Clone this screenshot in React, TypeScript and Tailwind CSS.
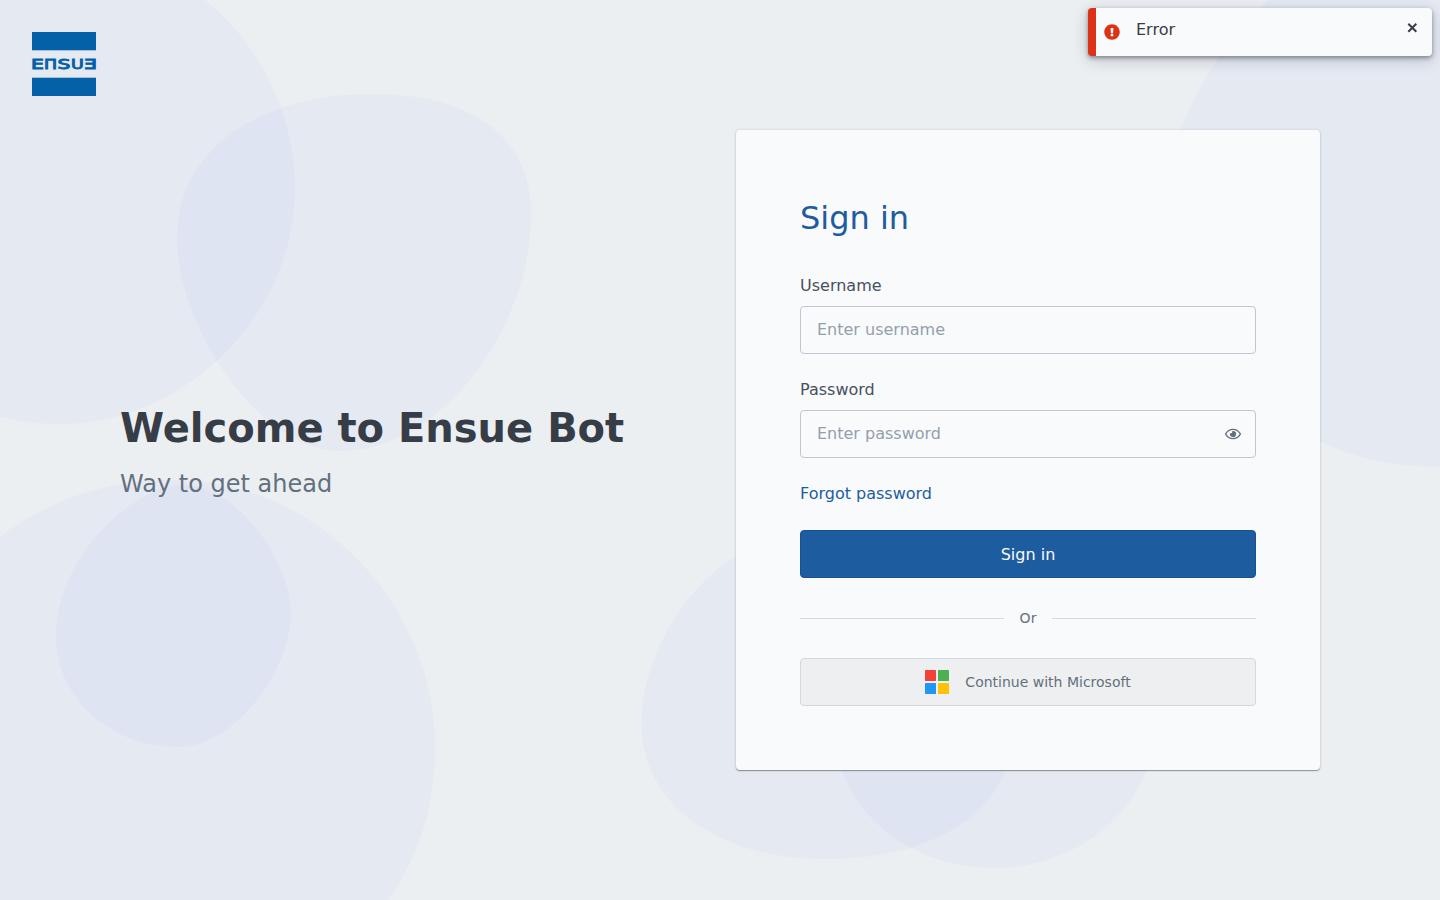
import { FaExclamationCircle, FaRegEye } from "react-icons/fa";

const blobs = [
  "M0 0H205C262 46 295 118 295 187C295 320 181 424 60 424C39 424 19 421 0 417Z",
  "M372 94C478 94 531 142 531 213C531 330 440 451 340 451C262 451 177 330 177 238C177 145 265 94 372 94Z",
  "M0 537C48 500 108 480 170 480C320 480 435 606 435 748C435 803 420 855 388 900H0Z",
  "M182 485C136 485 56 555 56 636C56 700 112 747 178 747C235 747 291 670 291 613C291 565 240 485 182 485Z",
  "M736 556C678 592 641.5 665 641.5 723C641.5 806 720 859 825 859C910 859 982 830 1005 771V600Z",
  "M842 771C864 832 928 868 995 868C1062 868 1124 828 1146 771L1100 650H880Z",
  "M1268 0C1232 32 1200 80 1181 130L1200 300L1320 441C1356 460 1400 467 1440 466.5V0Z",
];

function Background() {
  return (
    <svg
      className="absolute inset-0 h-full w-full"
      viewBox="0 0 1440 900"
      preserveAspectRatio="xMidYMid slice"
      fill="rgb(177,189,250)"
      fillOpacity={0.1}
      aria-hidden="true"
    >
      {blobs.map((d) => (
        <path key={d} d={d} />
      ))}
    </svg>
  );
}

const wordmark = [
  { char: "E", transform: "translate(-1.1 36.55) scale(1.54 1)" },
  { char: "Π", transform: "translate(11.95 36.55) scale(1.32 1)" },
  { char: "S", transform: "translate(25.4 36.55) scale(1.53 1)" },
  { char: "U", transform: "translate(39.1 36.55) scale(1.32 1)" },
  { char: "Ǝ", transform: "translate(52.2 36.55) scale(1.54 1)" },
];

function Logo() {
  return (
    <svg
      className="h-16 w-16 overflow-visible"
      viewBox="0 0 64 64"
      fill="#0460a7"
      role="img"
      aria-label="Ensue"
    >
      <rect width="64" height="18.3" />
      <rect y="45.7" width="64" height="18.3" />
      <g fontFamily="'DejaVu Sans', sans-serif" fontSize="13.2" stroke="#0460a7" strokeWidth="0.9">
        {wordmark.map(({ char, transform }) => (
          <text key={char} transform={transform}>
            {char}
          </text>
        ))}
      </g>
    </svg>
  );
}

function MicrosoftLogo() {
  return (
    <svg className="h-6 w-6" viewBox="0 0 24 24" aria-hidden="true">
      <rect width="11" height="11" rx="0.4" fill="#f44336" />
      <rect x="13" width="11" height="11" rx="0.4" fill="#4caf50" />
      <rect y="13" width="11" height="11" rx="0.4" fill="#2196f3" />
      <rect x="13" y="13" width="11" height="11" rx="0.4" fill="#ffc107" />
    </svg>
  );
}

function Toast() {
  return (
    <div
      role="alert"
      className="absolute top-2 right-2 flex h-12 w-[344px] items-start rounded border-l-8 border-[#dc3318] bg-[#f9fafc] px-2 shadow-[0_2px_4px_rgba(20,20,30,0.4),0_4px_16px_rgba(20,20,30,0.2)]"
    >
      <FaExclamationCircle className="mt-4 size-4 text-[#dc3318]" />
      <span className="mt-2.5 ml-4 flex-1 text-base leading-6 text-[#373d47]">Error</span>
      <button type="button" aria-label="Close" className="mt-3 mr-1 size-4">
        <svg className="size-4" viewBox="0 0 16 16" stroke="#373d47" strokeWidth="2">
          <path d="M4.3 3.8 12.3 11.8M12.3 3.8 4.3 11.8" />
        </svg>
      </button>
    </div>
  );
}

const inputClass =
  "h-12 w-full rounded border border-[#bfc7d5] bg-transparent px-4 pb-0.5 text-base text-[#373d47] outline-none placeholder:text-[#949fab]";

export default function App() {
  return (
    <div className="relative h-screen min-h-[900px] overflow-hidden bg-[#ebeff2] font-['DejaVu_Sans',sans-serif]">
      <Background />
      <header className="absolute top-8 left-8">
        <Logo />
      </header>
      <main className="relative grid h-full grid-cols-2 items-center gap-8 px-[120px]">
        <section>
          <h1 className="text-[40px] leading-[60px] font-bold whitespace-nowrap text-[#373d47]">
            Welcome to Ensue Bot
          </h1>
          <p className="mt-2 text-2xl leading-9 text-[#64707d]">Way to get ahead</p>
        </section>
        <form className="flex flex-col rounded bg-[#f9fafc] p-16 shadow-[0_1px_1px_rgba(20,25,35,0.4),0_0_3px_rgba(20,25,35,0.15)]">
          <h2 className="text-[32px] leading-[48px] text-[#1e5ca0]">Sign in</h2>
          <label htmlFor="username" className="mt-8 mb-2 text-base leading-6 text-[#47505c]">
            Username
          </label>
          <input id="username" className={inputClass} placeholder="Enter username" />
          <label htmlFor="password" className="mt-6 mb-2 text-base leading-6 text-[#47505c]">
            Password
          </label>
          <div className="relative">
            <input id="password" type="password" className={inputClass} placeholder="Enter password" />
            <FaRegEye className="absolute top-4 right-[15px] size-4 text-[#64707d]" />
          </div>
          <a href="#" className="mt-6 self-start text-base leading-6 text-[#1e5ca0]">
            Forgot password
          </a>
          <button
            type="button"
            className="mt-6 h-12 rounded border border-[#1a5092] bg-[#1e5ca0] pt-0.5 text-base text-[#f9fafc]"
          >
            Sign in
          </button>
          <div className="my-6 flex h-8 items-center gap-4 text-sm text-[#64707d]">
            <span className="h-px flex-1 bg-[#d5d8dc]" />
            Or
            <span className="h-px flex-1 bg-[#d5d8dc]" />
          </div>
          <button
            type="button"
            className="flex h-12 items-center justify-center gap-4 rounded border border-[#d5d8dc] bg-[#eeeff1] text-sm text-[#64707d]"
          >
            <MicrosoftLogo />
            Continue with Microsoft
          </button>
        </form>
      </main>
      <Toast />
    </div>
  );
}
